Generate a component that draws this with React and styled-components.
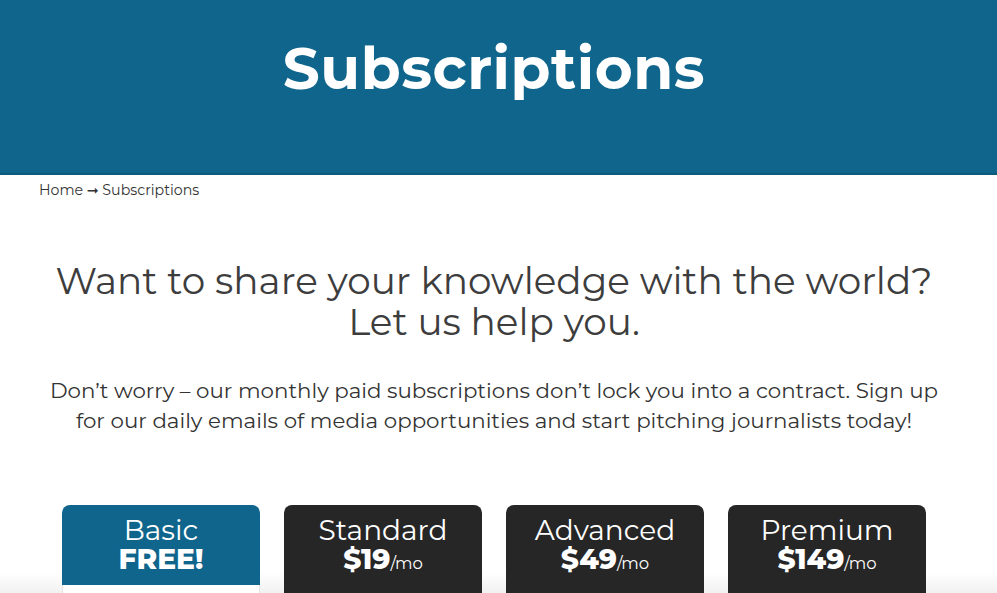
import styled, { createGlobalStyle } from 'styled-components';

const GlobalStyle = createGlobalStyle`
    body {
        margin: 0;
        background: #fff;
        font-family: 'Montserrat', 'DejaVu Sans', sans-serif;
        color: #3a3a3a;
        overflow: hidden;
    }
`;

const Page = styled.div`
    width: 997px;
    height: 593px;
    overflow: hidden;
    background: linear-gradient(to bottom, #fff 0, #fff 572px, #f1f1f1 593px);
`;

const Banner = styled.header`
    height: 175px;
    background: #10658c;
    border-bottom: 2px solid #0e5a7d;
    display: flex;
    justify-content: center;
    padding: 33px 9px 0 0;
    box-sizing: border-box;
`;

const BannerTitle = styled.h1`
    margin: 0;
    color: #fff;
    font-size: 58px;
    font-weight: 700;
    letter-spacing: 0.5px;
    line-height: 72px;
`;

const Breadcrumb = styled.nav`
    padding: 5px 39px 0;
    font-size: 14.2px;
    color: #333;
    line-height: 20px;
`;

const Intro = styled.section`
    text-align: center;
    padding: 0 29px 0 20px;
`;

const Heading = styled.h2`
    margin: 60px 0 0;
    font-size: 37.4px;
    font-weight: 400;
    line-height: 41px;
    color: #3d3d3d;
`;

const Lead = styled.p`
    margin: 33px 0 0;
    font-size: 21.35px;
    line-height: 30px;
    color: #333;
`;

const Plans = styled.div`
    display: grid;
    grid-template-columns: repeat(4, 198px);
    gap: 24px;
    margin: 70px 0 0 62px;
`;

const Card = styled.div`
    display: flex;
    flex-direction: column;
    height: 120px;
`;

const CardHead = styled.div`
    background: ${(p) => (p.$featured ? '#10658c' : '#262626')};
    color: #fff;
    text-align: center;
    height: ${(p) => (p.$featured ? '80px' : '120px')};
    flex-shrink: 0;
    border-radius: 8px 8px 0 0;
    padding-top: 10px;
    box-sizing: border-box;
`;

const CardBody = styled.div`
    flex: 1;
    background: #fff;
    border: 1px solid #e4e4e4;
    border-top: none;
`;

const PlanName = styled.div`
    font-size: 28px;
    font-weight: 400;
    line-height: 30px;
`;

const Price = styled.div`
    font-size: 28px;
    font-weight: 800;
    line-height: 28px;
`;

const Per = styled.span`
    font-size: 16.5px;
    font-weight: 400;
`;

const plans = [
    { name: 'Basic', price: 'FREE!', featured: true },
    { name: 'Standard', price: '$19', per: true },
    { name: 'Advanced', price: '$49', per: true },
    { name: 'Premium', price: '$149', per: true },
];

export default function App() {
    return (
        <Page>
            <GlobalStyle />
            <Banner>
                <BannerTitle>Subscriptions</BannerTitle>
            </Banner>
            <Breadcrumb>Home ➞ Subscriptions</Breadcrumb>
            <Intro>
                <Heading>
                    Want to share your knowledge with the world?
                    <br />
                    Let us help you.
                </Heading>
                <Lead>
                    Don’t worry – our monthly paid subscriptions don’t lock you into a contract. Sign up
                    <br />
                    for our daily emails of media opportunities and start pitching journalists today!
                </Lead>
            </Intro>
            <Plans>
                {plans.map((plan) => (
                    <Card key={plan.name}>
                        <CardHead $featured={plan.featured}>
                            <PlanName>{plan.name}</PlanName>
                            <Price>
                                {plan.price}
                                {plan.per && <Per>/mo</Per>}
                            </Price>
                        </CardHead>
                        <CardBody />
                    </Card>
                ))}
            </Plans>
        </Page>
    );
}
